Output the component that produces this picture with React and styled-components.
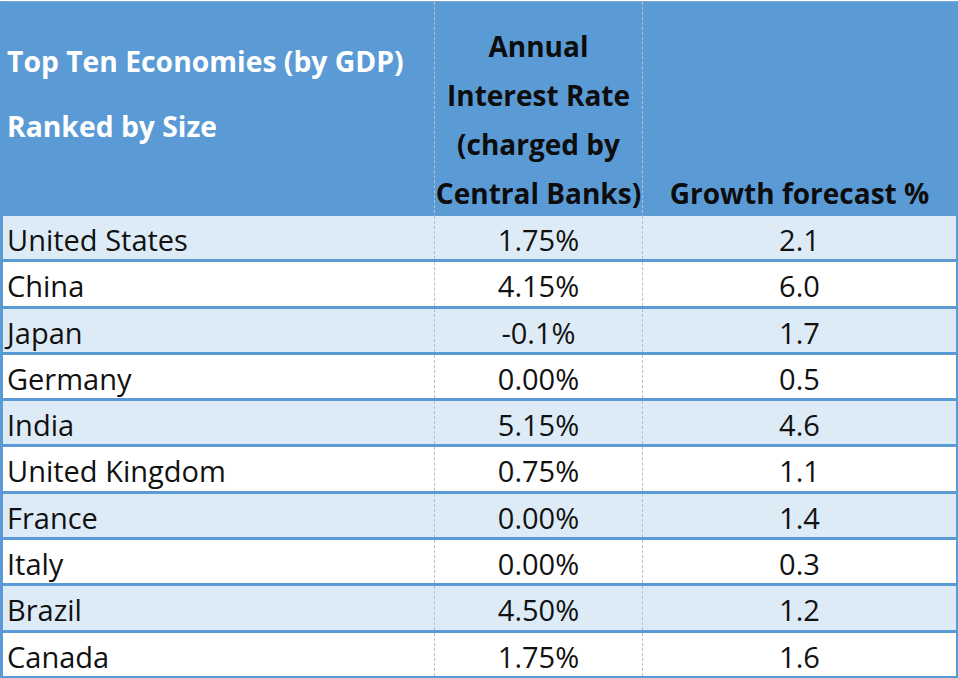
import React from "react";
import styled, { createGlobalStyle } from "styled-components";

const Global = createGlobalStyle`
  html, body { margin: 0; padding: 0; background: #ffffff; }
  body { font-family: "Open Sans", "Liberation Sans", sans-serif; }
`;

const BLUE = "#5b9bd5";
const BAND = "#ddebf7";
const DASH = "#b3c0d0";

const Table = styled.div`
  width: 958px;
  box-sizing: border-box;
  margin-top: 1px;
  border-top: 1px solid #7aa7d6;
  border-left: 3px solid ${BLUE};
  border-right: 2px solid ${BLUE};
`;

const HeaderRow = styled.div`
  display: grid;
  grid-template-columns: 431px 208px 314px;
  height: 214px;
  background: ${BLUE};
`;

const HeaderTitle = styled.div`
  padding: 27px 0 0 4px;
  color: #ffffff;
  font-weight: 700;
  font-size: 28.3px;
  line-height: 65px;
  white-space: nowrap;
`;

const HeaderCol = styled.div`
  display: flex;
  flex-direction: column;
  align-items: center;
  padding-top: ${(p) => p.$top}px;
  border-left: 1px dashed ${DASH};
  color: #0d0d0d;
  font-weight: 700;
  font-size: 28px;
  line-height: 49px;
  white-space: nowrap;
  text-align: center;
`;

const Row = styled.div`
  display: grid;
  grid-template-columns: 431px 208px 314px;
  height: 43.3px;
  background: ${(p) => (p.$alt ? BAND : "#ffffff")};
  border-bottom: 3px solid ${BLUE};
  font-size: 29px;
  line-height: 38px;
  color: #111111;
`;

const NameCell = styled.div`
  padding: 5px 0 0 4px;
  white-space: nowrap;
`;

const ValueCell = styled.div`
  padding-top: 5px;
  text-align: center;
  border-left: 1px dashed ${DASH};
  white-space: nowrap;
`;

const data = [
  ["United States", "1.75%", "2.1"],
  ["China", "4.15%", "6.0"],
  ["Japan", "-0.1%", "1.7"],
  ["Germany", "0.00%", "0.5"],
  ["India", "5.15%", "4.6"],
  ["United Kingdom", "0.75%", "1.1"],
  ["France", "0.00%", "1.4"],
  ["Italy", "0.00%", "0.3"],
  ["Brazil", "4.50%", "1.2"],
  ["Canada", "1.75%", "1.6"],
];

export default function App() {
  return (
    <>
      <Global />
      <Table>
        <HeaderRow>
          <HeaderTitle>
            <div>Top Ten Economies (by GDP)</div>
            <div>Ranked by Size</div>
          </HeaderTitle>
          <HeaderCol $top={20}>
            <div>Annual</div>
            <div>Interest Rate</div>
            <div>(charged by</div>
            <div>Central Banks)</div>
          </HeaderCol>
          <HeaderCol $top={167}>
            <div>Growth forecast %</div>
          </HeaderCol>
        </HeaderRow>
        {data.map(([name, rate, growth], i) => (
          <Row key={name} $alt={i % 2 === 0}>
            <NameCell>{name}</NameCell>
            <ValueCell>{rate}</ValueCell>
            <ValueCell>{growth}</ValueCell>
          </Row>
        ))}
      </Table>
    </>
  );
}
